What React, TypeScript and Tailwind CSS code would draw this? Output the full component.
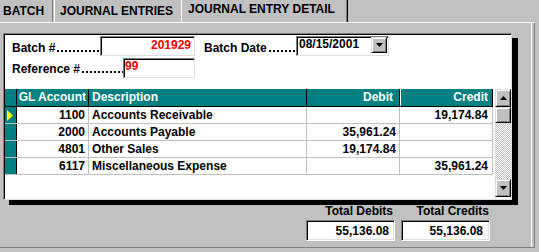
import React from 'react';

type Line = { gl: string; desc: string; debit: string; credit: string; current?: boolean };

const lines: Line[] = [
  { gl: '1100', desc: 'Accounts Receivable', debit: '', credit: '19,174.84', current: true },
  { gl: '2000', desc: 'Accounts Payable', debit: '35,961.24', credit: '' },
  { gl: '4801', desc: 'Other Sales', debit: '19,174.84', credit: '' },
  { gl: '6117', desc: 'Miscellaneous Expense', debit: '', credit: '35,961.24' },
];

// win95-ish bevels
const sunkenWhite =
  'bg-white border border-t-[#808080] border-l-[#808080] border-r-[#dfdfdf] border-b-[#dfdfdf] shadow-[inset_1px_1px_0_#000]';
const sunkenGray =
  'bg-white border border-t-[#808080] border-l-[#808080] border-r-white border-b-white shadow-[inset_1px_1px_0_#000,inset_-1px_-1px_0_#dfdfdf]';
const raised =
  'bg-[#c0c0c0] border border-t-[#dfdfdf] border-l-[#dfdfdf] border-r-black border-b-black shadow-[inset_1px_1px_0_#fff,inset_-1px_-1px_0_#808080] flex items-center justify-center';

const Arrow = ({ dir }: { dir: 'up' | 'down' }) => (
  <svg width="7" height="4" viewBox="0 0 7 4">
    {dir === 'down' ? <polygon points="0,0 7,0 3.5,4" fill="#000" /> : <polygon points="0,4 7,4 3.5,0" fill="#000" />}
  </svg>
);

// label followed by a dotted leader up to the field
const Label = ({ text, width, top }: { text: string; width: string; top: string }) => (
  <div className={`${width} ${top} flex leading-[14px]`}>
    <span className="whitespace-nowrap">{text}</span>
    <span className="flex-1 ml-[2px] mt-[9px] h-[2px] bg-[image:linear-gradient(to_right,#000_2px,transparent_2px)] bg-[length:4px_2px]" />
  </div>
);

const App: React.FC = () => {
  return (
    <div className="w-[539px] h-[252px] bg-[#c0c0c0] overflow-hidden font-['Liberation_Sans',Arial,sans-serif] font-bold text-[12px] text-black">
      {/* Tabs */}
      <div className="flex h-[22px] relative z-10">
        <div className="w-[53px] h-[22px] pl-[3px] pt-[4px] leading-[14px] border-r border-r-[#808080]">BATCH</div>
        <div className="ml-[1px] w-[127px] h-[22px] pl-[5px] pt-[4px] leading-[14px] border-l border-l-white">JOURNAL ENTRIES</div>
        <div className="w-[167px] h-[22px] pl-[6px] pt-[2px] leading-[14px] border-l border-l-white border-r border-r-black shadow-[inset_-1px_0_0_#808080]">
          JOURNAL ENTRY DETAIL
        </div>
      </div>

      {/* Tab panel */}
      <div className="w-[535px] h-[226px] border-t border-t-white border-r border-r-[#808080] border-b border-b-[#808080] shadow-[inset_-2px_0_0_#c0c0c0,inset_-3px_0_0_#fff]">
        {/* White detail box */}
        <div className="ml-[3px] mt-[10px] w-[509px] h-[167px] pl-[1px] pt-[1px] flex flex-col bg-white border border-t-[#808080] border-l-[#808080] border-r-[#dfdfdf] border-b-[#dfdfdf] shadow-[inset_1px_1px_0_#000,6px_5px_0_#000]">
          {/* Header fields */}
          <div className="pl-[7px] mt-[1px] flex items-start h-[20px]">
            <Label text="Batch #" width="w-[88px]" top="mt-[5px]" />
            <div className={`${sunkenWhite} w-[95px] h-[20px] pt-[1px] pr-[3px] text-right leading-[14px] text-[#ff0000]`}>
              201929
            </div>
            <div className="ml-[9px]">
              <Label text="Batch Date" width="w-[92px]" top="mt-[5px]" />
            </div>
            <div className={`${sunkenWhite} w-[93px] h-[20px] flex items-start`}>
              <span className="flex-1 pl-[2px] leading-[14px]">08/15/2001</span>
              <div className={`${raised} w-[16px] h-[16px] mr-[1px]`}>
                <Arrow dir="down" />
              </div>
            </div>
          </div>
          <div className="pl-[7px] mt-[2px] flex items-start h-[20px]">
            <Label text="Reference #" width="w-[111px]" top="mt-[4px]" />
            <div className={`${sunkenWhite} w-[72px] h-[20px] pl-[1px] leading-[14px] text-[#ff0000]`}>99</div>
          </div>

          {/* Grid */}
          <div className="mt-[11px] flex flex-1">
            <div className="w-[488px] flex flex-col">
              <div className="flex h-[18px] bg-[#008080] text-white border-b border-b-black">
                <div className="w-[12px] border-r border-r-black" />
                <div className="w-[72px] border-r border-r-black pr-[2px] text-right leading-[17px]">GL Account</div>
                <div className="w-[218px] border-r border-r-black pl-[3px] leading-[17px]">Description</div>
                <div className="w-[93px] border-r border-r-black pr-[6px] text-right leading-[17px]">Debit</div>
                <div className="w-[93px] border-r border-r-black border-l border-l-white pr-[4px] text-right leading-[17px]">Credit</div>
              </div>
              {lines.map((l) => (
                <div key={l.gl} className="flex h-[17px] border-b border-b-[#c0c0c0] leading-[16px]">
                  <div className="w-[12px] bg-[#008080] border-r border-r-black flex items-center pl-[2px]">
                    {l.current && (
                      <svg width="6" height="11" viewBox="0 0 6 11">
                        <polygon points="0,0 6,5.5 0,11" fill="#ffff00" />
                      </svg>
                    )}
                  </div>
                  <div className="w-[72px] border-r border-r-[#c0c0c0] pr-[3px] text-right">{l.gl}</div>
                  <div className="w-[218px] border-r border-r-[#c0c0c0] pl-[3px]">{l.desc}</div>
                  <div className="w-[93px] border-r border-r-[#c0c0c0] pr-[3px] text-right">{l.debit}</div>
                  <div className="w-[93px] border-r border-r-[#c0c0c0] pr-[4px] text-right">{l.credit}</div>
                </div>
              ))}
            </div>
            {/* Scrollbar */}
            <div className="ml-[2px] w-[16px] h-[108px] flex flex-col">
              <div className={`${raised} h-[18px]`}>
                <Arrow dir="up" />
              </div>
              <div className={`${raised} h-[16px]`} />
              <div className="flex-1 bg-[image:repeating-conic-gradient(#c0c0c0_0_25%,#fff_0_50%)] bg-[length:2px_2px]" />
              <div className={`${raised} h-[18px]`}>
                <Arrow dir="down" />
              </div>
            </div>
          </div>
        </div>

        {/* Totals */}
        <div className="ml-[306px] mt-[4px] flex gap-[6px]">
          <div className="w-[89px] flex flex-col">
            <div className="text-right pr-[2px] leading-[14px]">Total Debits</div>
            <div className={`${sunkenGray} mt-[2px] h-[21px] pr-[5px] flex items-center justify-end leading-[14px]`}>55,136.08</div>
          </div>
          <div className="w-[89px] flex flex-col">
            <div className="text-right pr-[1px] leading-[14px]">Total Credits</div>
            <div className={`${sunkenGray} mt-[2px] h-[21px] pr-[6px] flex items-center justify-end leading-[14px]`}>55,136.08</div>
          </div>
        </div>
      </div>
    </div>
  );
};

export default App;
